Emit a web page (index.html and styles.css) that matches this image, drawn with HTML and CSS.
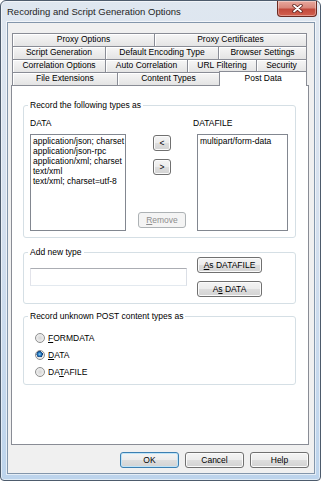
FILE: index.html
```html
<!doctype html>
<html lang="en">
    <head>
        <meta charset="UTF-8">
        <meta name="viewport" content="width=device-width, initial-scale=1.0">
        <title>Recording and Script Generation Options</title>
        <link rel="stylesheet" href="styles.css">
    </head>
    <body>
        <div class="window">
            <div class="titlebar">
                <span class="title">Recording and Script Generation Options</span>
                <span class="close-btn">
                    <svg width="11" height="9" viewBox="0 0 11 9">
                        <path d="M2 1.5 L9 7.5 M9 1.5 L2 7.5" stroke="#5a1f1a" stroke-width="3.4" stroke-linecap="round"/>
                        <path d="M2 1.5 L9 7.5 M9 1.5 L2 7.5" stroke="#ffffff" stroke-width="1.8" stroke-linecap="round"/>
                    </svg>
                </span>
            </div>

            <div class="client">
                <!-- Onglets (4 rangées) -->
                <div class="tabs">
                    <div class="tab-row">
                        <div class="tab tab-proxy">Proxy Options</div>
                        <div class="tab tab-certs">Proxy Certificates</div>
                    </div>
                    <div class="tab-row">
                        <div class="tab tab-script">Script Generation</div>
                        <div class="tab tab-encoding">Default Encoding Type</div>
                        <div class="tab tab-browser">Browser Settings</div>
                    </div>
                    <div class="tab-row">
                        <div class="tab tab-correlation">Correlation Options</div>
                        <div class="tab tab-auto">Auto Correlation</div>
                        <div class="tab tab-url">URL Filtering</div>
                        <div class="tab tab-security">Security</div>
                    </div>
                    <div class="tab-row">
                        <div class="tab tab-extensions">File Extensions</div>
                        <div class="tab tab-content">Content Types</div>
                        <div class="tab tab-post active">Post Data</div>
                    </div>
                </div>

                <div class="tab-panel">
                    <fieldset class="group group-types">
                        <legend>Record the following types as</legend>
                        <div class="types-grid">
                            <div class="col-label">DATA</div>
                            <div></div>
                            <div class="col-label datafile-label">DATAFILE</div>

                            <div class="listbox">
                                <div>application/json; charset</div>
                                <div>application/json-rpc</div>
                                <div>application/xml; charset</div>
                                <div>text/xml</div>
                                <div>text/xml; charset=utf-8</div>
                            </div>
                            <div class="move-buttons">
                                <button class="btn btn-small">&lt;</button>
                                <button class="btn btn-small">&gt;</button>
                                <button class="btn btn-remove" disabled><u>R</u>emove</button>
                            </div>
                            <div class="listbox">
                                <div>multipart/form-data</div>
                            </div>
                        </div>
                    </fieldset>

                    <fieldset class="group group-add">
                        <legend>Add new type</legend>
                        <div class="add-row">
                            <input class="textbox" type="text">
                            <div class="add-buttons">
                                <button class="btn btn-add"><u>A</u>s DATAFILE</button>
                                <button class="btn btn-add">A<u>s</u> DATA</button>
                            </div>
                        </div>
                    </fieldset>

                    <fieldset class="group group-unknown">
                        <legend>Record unknown POST content types as</legend>
                        <label class="radio-row"><span class="radio"></span><span><u>F</u>ORMDATA</span></label>
                        <label class="radio-row"><span class="radio checked"></span><span><u>D</u>ATA</span></label>
                        <label class="radio-row"><span class="radio"></span><span>DA<u>T</u>AFILE</span></label>
                    </fieldset>
                </div>

                <div class="button-bar">
                    <button class="btn btn-dialog btn-default">OK</button>
                    <button class="btn btn-dialog">Cancel</button>
                    <button class="btn btn-dialog">Help</button>
                </div>
            </div>
        </div>
    </body>
</html>
```

FILE: styles.css
```css
:root {
    --frame-border: #4d5b6c;
    --client-border: #8396ab;
    --tab-border: #898c95;
    --group-border: #d5dfe5;
    --list-border: #828790;
    --btn-border: #707070;
    --dialog-bg: #f0f0f0;
}
* {
    box-sizing: border-box;
}
html, body {
    margin: 0;
}
body {
    font-family: "Liberation Sans", Arial, sans-serif;
    font-size: 8.5px;
    color: #000;
    background: #fff;
}

/* Cadre de la fenêtre */
.window {
    width: 321px;
    height: 481px;
    display: flex;
    flex-direction: column;
    padding: 0 5px 6px 6px;
    border: 1px solid var(--frame-border);
    border-radius: 6px 6px 4px 4px;
    background: linear-gradient(to bottom, #dfe7f0 0%, #d5e0ee 45%, #bdd4ec 100%);
    box-shadow: inset 0 0 0 1px rgba(255, 255, 255, 0.55);
}

.titlebar {
    flex: none;
    height: 21px;
    display: flex;
    justify-content: space-between;
    align-items: flex-start;
}

.title {
    padding-top: 5px;
    font-size: 9.5px;
    line-height: 12px;
    color: #1e1e1e;
}

.close-btn {
    width: 40px;
    height: 16px;
    margin-right: -2px;
    display: flex;
    align-items: center;
    justify-content: center;
    border: 1px solid #6b2a22;
    border-top: none;
    border-radius: 0 0 4px 4px;
    background: linear-gradient(to bottom, #e8a89d 0%, #d9877b 45%, #c24a3c 55%, #d2604f 100%);
    box-shadow: inset 0 0 0 1px rgba(255, 255, 255, 0.35);
}

.client {
    flex: 1;
    display: flex;
    flex-direction: column;
    padding: 10px 0 5px 0;
    background: var(--dialog-bg);
    border: 1px solid var(--client-border);
    box-shadow: 0 0 0 1px rgba(255, 255, 255, 0.6);
}

/* Onglets */
.tabs {
    margin-left: 4px;
    width: 295px;
}

.tab-row {
    display: flex;
}

.tab {
    height: 13px;
    line-height: 11px;
    text-align: center;
    white-space: nowrap;
    border: 1px solid var(--tab-border);
    border-right: none;
    border-bottom: none;
    background: linear-gradient(to bottom, #f6f6f6, #e4e4e4);
    box-shadow: inset 1px 1px 0 #ffffff;
}

.tab:last-child {
    border-right: 1px solid var(--tab-border);
}

.tab-proxy { width: 142px; }
.tab-certs { width: 153px; }
.tab-script { width: 93px; }
.tab-encoding { width: 113px; }
.tab-browser { width: 89px; }
.tab-correlation { width: 93px; }
.tab-auto { width: 82px; }
.tab-url { width: 69px; }
.tab-security { width: 51px; }
.tab-extensions { width: 105px; }
.tab-content { width: 103px; }
.tab-post { width: 88px; }

.tab.active {
    position: relative;
    z-index: 1;
    height: 15px;
    margin: -1px 0 -1px 0;
    line-height: 12px;
    background: #fff;
    box-shadow: none;
}

.tab-panel {
    flex: 1;
    width: 298px;
    margin-left: 3px;
    padding: 0 12px 0 11px;
    background: #fff;
    border: 1px solid var(--tab-border);
}

/* Cadres de groupe */
.group {
    margin: 0;
    min-width: 0;
    padding: 8px 7px 6px 6px;
    border: 1px solid var(--group-border);
    border-radius: 3px;
}

.group legend {
    padding: 0 2px;
    margin-left: -2px;
    line-height: 10px;
}

.group-types {
    margin-top: 14px;
}

.group-add {
    margin-top: 9px;
    padding-top: 0;
}

.group-unknown {
    margin-top: 7px;
    padding-bottom: 4px;
}

.types-grid {
    display: grid;
    grid-template-columns: 96px 71px 91px;
    grid-template-rows: 10px 97px;
    row-gap: 6px;
}

.col-label {
    line-height: 10px;
}

.datafile-label {
    margin-left: -4px;
}

.listbox {
    padding: 1px 2px;
    overflow: hidden;
    white-space: nowrap;
    line-height: 10px;
    border: 1px solid var(--list-border);
    background: #fff;
}

.move-buttons {
    display: flex;
    flex-direction: column;
    align-items: center;
    gap: 8px;
    padding: 1px 0 3px 1px;
}

/* Boutons style Windows 7 */
.btn {
    padding: 0;
    font: inherit;
    line-height: 14px;
    color: #000;
    border: 1px solid var(--btn-border);
    border-radius: 3px;
    background: linear-gradient(to bottom, #f4f4f4 0%, #ececec 50%, #dedede 50%, #d3d3d3 100%);
    box-shadow: inset 0 0 0 1px #fbfbfb;
}

.btn-small {
    width: 18px;
    height: 16px;
}

.btn-remove {
    width: 48px;
    height: 16px;
    margin-top: auto;
    color: #8d8d8d;
    border-color: #adb2b5;
    background: #f4f4f4;
    box-shadow: none;
}

.add-row {
    display: flex;
    align-items: center;
    gap: 10px;
}

.textbox {
    width: 157px;
    height: 18px;
    margin: 0;
    border: 1px solid;
    border-color: #abadb3 #dbdfe6 #e3e9ef #e2e3ea;
    background: #fff;
}

.add-buttons {
    display: flex;
    flex-direction: column;
    gap: 8px;
}

.btn-add {
    width: 65px;
    height: 16px;
}

/* Boutons radio */
.radio-row {
    display: flex;
    align-items: center;
    gap: 3px;
    height: 17px;
    padding-left: 5px;
}

.radio {
    width: 10px;
    height: 10px;
    border: 1px solid #8e8f8f;
    border-radius: 50%;
    background: radial-gradient(circle at 50% 50%, #d6d6d6 0, #e8e8e8 50%, #f6f6f6 100%);
}

.radio.checked {
    background:
        radial-gradient(circle at 45% 40%, #8fd0f5 0, #2a7fc4 1.6px, #103f7a 3px, transparent 3.3px),
        radial-gradient(circle at 50% 50%, #d6d6d6 0, #e8e8e8 50%, #f6f6f6 100%);
}

.button-bar {
    display: flex;
    justify-content: flex-end;
    gap: 6px;
    margin-top: 7px;
    padding-right: 5px;
}

.btn-dialog {
    width: 59px;
    height: 16px;
}

.btn-default {
    border-color: #3c7fb1;
    box-shadow: inset 0 0 0 1px #bfe4f8;
}
```
